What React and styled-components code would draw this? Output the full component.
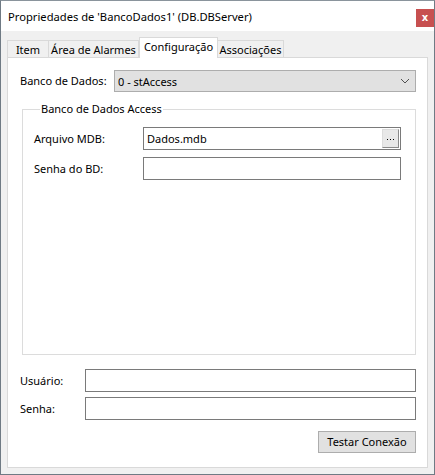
import React from "react";
import styled, { createGlobalStyle } from "styled-components";

const GlobalStyle = createGlobalStyle`
  html, body {
    margin: 0;
    padding: 0;
    background: #ffffff;
  }
  body {
    font-family: "Noto Sans", "Open Sans", sans-serif;
    font-size: 11px;
    color: #000000;
  }
`;

const tabs = [
  { name: "Item", width: 42 },
  { name: "Área de Alarmes", width: 90 },
  { name: "Configuração", width: 79, active: true },
  { name: "Associações", width: 66 },
];

const App = () => {
  return (
    <>
      <GlobalStyle />
      <Window>
        <TitleBar>
          <Title>Propriedades de 'BancoDados1' (DB.DBServer)</Title>
          <Close>x</Close>
        </TitleBar>
        <Body>
          <TabRow>
            {tabs.map((t) => (
              <Tab key={t.name} width={t.width} active={t.active}>
                {t.name}
              </Tab>
            ))}
          </TabRow>
          <Panel>
            <Row>
              <Label width={94}>Banco de Dados:</Label>
              <Combo>
                <span>0 - stAccess</span>
                <svg width="10" height="6" viewBox="0 0 10 6">
                  <path d="M1 1 L5 5 L9 1" fill="none" stroke="#505050" strokeWidth="1" />
                </svg>
              </Combo>
            </Row>
            <Group>
              <Legend>Banco de Dados Access</Legend>
              <GroupRow>
                <Label width={109}>Arquivo MDB:</Label>
                <Field>
                  <FieldText>Dados.mdb</FieldText>
                  <Browse>
                    <Dot />
                    <Dot />
                    <Dot />
                  </Browse>
                </Field>
              </GroupRow>
              <GroupRow gap={7}>
                <Label width={109}>Senha do BD:</Label>
                <Field />
              </GroupRow>
            </Group>
            <Row top={14}>
              <Label width={65}>Usuário:</Label>
              <Field />
            </Row>
            <Row top={5}>
              <Label width={65}>Senha:</Label>
              <Field />
            </Row>
            <ButtonRow>
              <Button>Testar Conexão</Button>
            </ButtonRow>
          </Panel>
        </Body>
      </Window>
    </>
  );
};

const Window = styled.div`
  width: 435px;
  height: 475px;
  box-sizing: border-box;
  border: 1px solid #6f7a84;
  border-top-color: #8a949c;
  display: flex;
  flex-direction: column;
`;

const TitleBar = styled.div`
  height: 30px;
  background: #ffffff;
  display: flex;
  align-items: flex-start;
  justify-content: space-between;
  padding-left: 7px;
`;

const Title = styled.div`
  margin-top: 8px;
  font-size: 11.2px;
  line-height: 16px;
  color: #000000;
`;

const Close = styled.div`
  width: 18px;
  height: 18px;
  margin-top: 8px;
  background: #c75050;
  color: #ffffff;
  font-family: "DejaVu Sans", sans-serif;
  font-weight: bold;
  font-size: 10px;
  line-height: 17px;
  text-align: center;
`;

const Body = styled.div`
  flex: 1;
  background: #f0f0f0;
  padding: 7px 6px 6px 6px;
  display: flex;
  flex-direction: column;
`;

const TabRow = styled.div`
  display: flex;
  align-items: flex-end;
  height: 20px;
  position: relative;
  z-index: 1;
  margin-bottom: -1px;
`;

const Tab = styled.div`
  box-sizing: border-box;
  width: ${(p) => p.width}px;
  height: ${(p) => (p.active ? "21px" : "18px")};
  padding-top: 1px;
  background: ${(p) => (p.active ? "#ffffff" : "#f0f0f0")};
  border: 1px solid #d9d9d9;
  border-bottom: ${(p) => (p.active ? "none" : "1px solid #d9d9d9")};
  border-left: ${(p) => (p.active ? "1px solid #d9d9d9" : "none")};
  line-height: 15px;
  text-align: center;
  white-space: nowrap;
  position: relative;
  z-index: ${(p) => (p.active ? 2 : 1)};

  &:first-child {
    border-left: 1px solid #d9d9d9;
  }
`;

const Panel = styled.div`
  flex: 1;
  background: #ffffff;
  border: 1px solid #d9d9d9;
  padding: 12px 11px 0 12px;
  display: flex;
  flex-direction: column;
`;

const Row = styled.div`
  display: flex;
  align-items: center;
  margin-top: ${(p) => p.top || 0}px;
`;

const Label = styled.div`
  width: ${(p) => p.width}px;
  flex-shrink: 0;
  line-height: 16px;
  white-space: nowrap;
`;

const Combo = styled.div`
  flex: 1;
  height: 22px;
  box-sizing: border-box;
  background: #e1e1e1;
  border: 1px solid #adadad;
  display: flex;
  align-items: center;
  justify-content: space-between;
  padding: 0 5px 0 3px;
`;

const Group = styled.fieldset`
  margin: 9px 0 0 2px;
  padding: 0 14px 0 11px;
  height: 254px;
  box-sizing: border-box;
  border: 1px solid #dcdcdc;
  display: flex;
  flex-direction: column;
  min-width: 0;
`;

const Legend = styled.legend`
  margin-left: 6px;
  padding: 0 1px;
  line-height: 16px;
`;

const GroupRow = styled.div`
  display: flex;
  align-items: center;
  margin-top: ${(p) => (p.gap ? p.gap : 10)}px;
`;

const Field = styled.div`
  flex: 1;
  height: 23px;
  box-sizing: border-box;
  border: 1px solid #7a7a7a;
  background: #ffffff;
  display: flex;
  align-items: center;
  justify-content: space-between;
  padding: 0 1px 0 3px;
`;

const FieldText = styled.span`
  line-height: 16px;
`;

const Browse = styled.div`
  width: 17px;
  height: 19px;
  box-sizing: border-box;
  background: #e8e8e8;
  border: 1px solid #dcdcdc;
  border-right-color: #8a8a8a;
  border-bottom-color: #8a8a8a;
  display: flex;
  justify-content: center;
  align-items: center;
  gap: 2px;
  padding-top: 2px;
`;

const Dot = styled.span`
  width: 1px;
  height: 1px;
  background: #000000;
`;

const ButtonRow = styled.div`
  display: flex;
  justify-content: flex-end;
  margin-top: 11px;
`;

const Button = styled.div`
  width: 98px;
  height: 22px;
  box-sizing: border-box;
  background: #e1e1e1;
  border: 1px solid #adadad;
  display: flex;
  align-items: center;
  justify-content: center;
  line-height: 16px;
`;

export default App;
